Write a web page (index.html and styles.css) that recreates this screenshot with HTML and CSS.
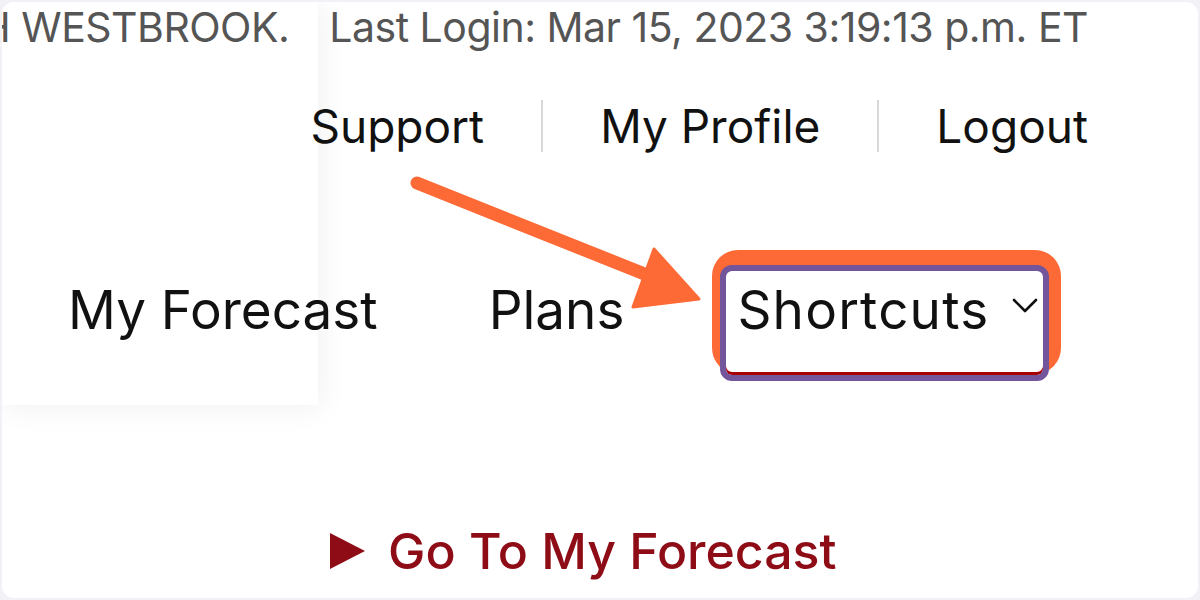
FILE: index.html
```html
<!DOCTYPE html>
<html>
<head>
<meta charset="utf-8">
<link rel="stylesheet" href="styles.css">
</head>
<body>
<div class="screen">
  <div class="panel"></div>
  <div class="content">
    <div class="userline">
      <span class="user">H WESTBROOK.</span>
      <span class="login">Last Login: Mar 15, 2023 3:19:13 p.m. ET</span>
    </div>
    <div class="links">
      <a class="link">Support</a>
      <span class="sep"></span>
      <a class="link">My Profile</a>
      <span class="sep"></span>
      <a class="link">Logout</a>
    </div>
    <nav class="nav">
      <a class="nav-item">My Forecast</a>
      <a class="nav-item plans">Plans</a>
      <a class="nav-item shortcuts"><span class="sc-label">Shortcuts</span>
        <svg class="chev" viewBox="0 0 28 18" width="28" height="18"><path d="M3 3 L14 14 L25 3" fill="none" stroke="#111" stroke-width="2.6" stroke-linecap="round" stroke-linejoin="round"/></svg>
      </a>
    </nav>
    <div class="goto">
      <span class="tri"></span>
      <a class="goto-link">Go To My Forecast</a>
    </div>
  </div>
  <svg class="arrow" viewBox="0 0 1200 600" width="1200" height="600">
    <line x1="417" y1="183" x2="662" y2="281" stroke="#fe6a35" stroke-width="13" stroke-linecap="round"/>
    <polygon points="654,249 699,299 633,307" fill="#fe6a35" stroke="#fe6a35" stroke-width="3" stroke-linejoin="round"/>
  </svg>
</div>
</body>
</html>
```
FILE: styles.css
```css
html, body {
  margin: 0;
  padding: 0;
  background: #f1f1f6;
}
body {
  width: 1200px;
  height: 600px;
  overflow: hidden;
  font-family: Inter, "Liberation Sans", sans-serif;
}
.screen {
  position: relative;
  margin: 2px;
  width: 1196px;
  height: 596px;
  background: #fff;
  border-radius: 12px;
  overflow: hidden;
}
.panel {
  position: absolute;
  left: -2px;
  top: -2px;
  width: 318px;
  height: 405px;
  background: #fff;
  box-shadow: 3px 3px 28px rgba(0,0,0,0.06);
  z-index: 0;
}
.content {
  position: relative;
  z-index: 1;
  display: flex;
  flex-direction: column;
  padding: 0 110px 0 0;
}
.userline {
  display: flex;
  justify-content: flex-end;
  gap: 40px;
  white-space: nowrap;
  font-size: 41px;
  line-height: 50px;
  color: #555;
  letter-spacing: -0.5px;
  margin-top: 0;
}
.links {
  display: flex;
  justify-content: flex-end;
  align-items: center;
  gap: 57px;
  margin-top: 44px;
  font-size: 46px;
  line-height: 60px;
  color: #111;
}
.sep {
  width: 2px;
  height: 52px;
  background: #d8d8d8;
}
.nav {
  display: flex;
  align-items: baseline;
  margin-top: 109px;
  padding-left: 66px;
  font-size: 53px;
  line-height: 64px;
  color: #111;
}
.plans {
  margin-left: 111px;
}
.shortcuts {
  position: relative;
  margin-left: 96px;
  display: flex;
  align-items: center;
  gap: 22px;
  padding: 7px 4px 33px 11px;
  border: 6px solid #72559b;
  border-radius: 12px;
  background: #fff;
  box-shadow: inset 0 -3px 0 #a80000;
}
.sc-label {
  letter-spacing: 1.2px;
}
.shortcuts::before {
  content: "";
  position: absolute;
  left: -14px;
  top: -21px;
  right: -18px;
  bottom: 1px;
  background: #fe6a35;
  border-radius: 26px;
  z-index: -1;
}
.chev {
  margin-top: -8px;
}
.goto {
  display: flex;
  align-items: center;
  gap: 23px;
  margin-top: 140px;
  padding-left: 328px;
  color: #8e0c16;
  font-size: 50px;
  font-weight: 500;
  line-height: 60px;
}
.tri {
  width: 0;
  height: 0;
  border-top: 18px solid transparent;
  border-bottom: 18px solid transparent;
  border-left: 35px solid #8e0c16;
}
.arrow {
  position: absolute;
  left: -2px;
  top: -2px;
  z-index: 2;
  pointer-events: none;
}
```
